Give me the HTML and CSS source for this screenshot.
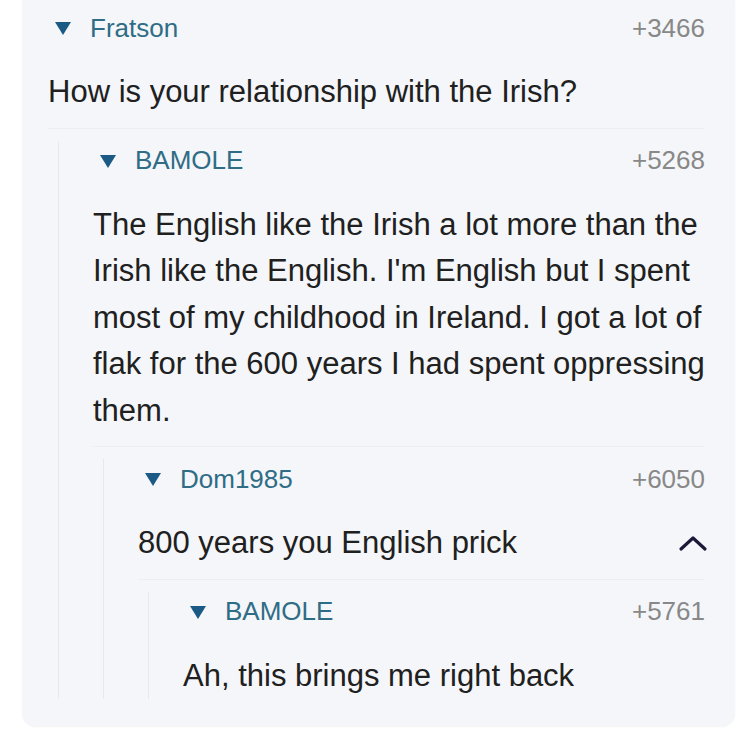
FILE: index.html
```html
<!DOCTYPE html>
<html lang="en">
<head>
<meta charset="utf-8">
<title>Comments</title>
<link rel="stylesheet" href="styles.css">
</head>
<body>
<div class="card">
  <div class="comment">
    <div class="head">
      <span class="tri"></span>
      <span class="name">Fratson</span>
      <span class="score">+3466</span>
    </div>
    <div class="body"><p class="text">How is your relationship with the Irish?</p></div>
    <div class="rule"></div>
    <div class="children">
      <div class="comment">
        <div class="head">
          <span class="tri"></span>
          <span class="name">BAMOLE</span>
          <span class="score">+5268</span>
        </div>
        <div class="body"><p class="text">The English like the Irish a lot more than the<br>Irish like the English. I'm English but I spent<br>most of my childhood in Ireland. I got a lot of<br>flak for the 600 years I had spent oppressing<br>them.</p></div>
        <div class="rule"></div>
        <div class="children">
          <div class="comment">
            <div class="head">
              <span class="tri"></span>
              <span class="name">Dom1985</span>
              <span class="score">+6050</span>
            </div>
            <div class="body">
              <p class="text">800 years you English prick</p>
              <svg class="chev" width="32" height="20" viewBox="0 0 32 20" aria-hidden="true"><polyline points="4,16 16,5 28,16" fill="none" stroke="#1a1a38" stroke-width="3.2" stroke-linecap="round" stroke-linejoin="round"/></svg>
            </div>
            <div class="rule"></div>
            <div class="children">
              <div class="comment">
                <div class="head">
                  <span class="tri"></span>
                  <span class="name">BAMOLE</span>
                  <span class="score">+5761</span>
                </div>
                <div class="body"><p class="text">Ah, this brings me right back</p></div>
              </div>
            </div>
          </div>
        </div>
      </div>
    </div>
  </div>
</div>
</body>
</html>
```

FILE: styles.css
```css
html, body {
  margin: 0;
  padding: 0;
  background: #ffffff;
}

body {
  font-family: "Liberation Sans", Arial, Helvetica, sans-serif;
  width: 755px;
  height: 730px;
  overflow: hidden;
}

.card {
  margin-left: 22px;
  width: 713px;
  box-sizing: border-box;
  background: #f4f6f9;
  border-radius: 0 0 14px 14px;
  box-shadow: 0 1px 2px rgba(0, 0, 0, 0.06);
  padding: 8px 30px 27px 26px;
}

.comment {
  display: flex;
  flex-direction: column;
}

.head {
  display: flex;
  align-items: center;
  height: 40px;
  padding-left: 7px;
}

.tri {
  width: 0;
  height: 0;
  border-left: 8.5px solid transparent;
  border-right: 8.5px solid transparent;
  border-top: 13px solid #1b5a84;
  margin-right: 19px;
  margin-top: 1px;
}

.name {
  font-size: 26px;
  color: #2f6c86;
  flex: 1;
}

.score {
  font-size: 26px;
  color: #888888;
}

.body {
  margin-top: 21px;
  display: flex;
  align-items: center;
  justify-content: space-between;
}

.text {
  margin: 0;
  font-size: 31px;
  line-height: 46.5px;
  color: #202020;
  white-space: nowrap;
}

.chev {
  display: block;
  margin-right: -4px;
}

.rule {
  height: 1px;
  background: #eceef2;
  margin: 12px 0 12px;
}

.children {
  margin-left: 10px;
  border-left: 1px solid #e5e8ed;
  padding-left: 34px;
}
```
